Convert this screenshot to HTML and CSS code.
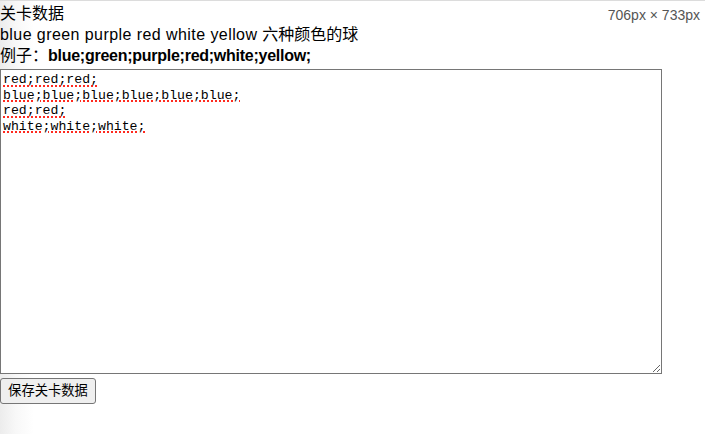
FILE: index.html
```html
<!DOCTYPE html>
<html lang="zh-CN">
<head>
<meta charset="utf-8">
<title>关卡数据</title>
<link rel="stylesheet" href="styles.css">
</head>
<body>
<div class="page">
  <div class="header">
    <div class="title">关卡数据</div>
    <div class="size">706px × 733px</div>
  </div>
  <div class="line"><span class="latin">blue green purple red white yellow </span>六种颜色的球</div>
  <div class="line">例子：<b class="example">blue;green;purple;red;white;yellow;</b></div>
  <textarea class="data" spellcheck="false">red;red;red;
blue;blue;blue;blue;blue;blue;
red;red;
white;white;white;</textarea>
  <div class="actions">
    <button class="save" type="button">保存关卡数据</button>
  </div>
</div>
</body>
</html>
```

FILE: styles.css
```css
html, body {
  margin: 0;
  padding: 0;
  height: 100%;
}

body {
  background: linear-gradient(to right, #ececec 0px, #f8f8f8 16px, #ffffff 34px);
  border-top: 1px solid #dcdcdc;
  box-sizing: border-box;
  font-family: "Liberation Sans", "Noto Sans CJK SC", sans-serif;
  font-size: 16px;
  color: #000;
}

.page {
  padding-top: 2px;
  display: flex;
  flex-direction: column;
  align-items: flex-start;
}

.header {
  align-self: stretch;
  display: flex;
  justify-content: space-between;
  align-items: flex-start;
}

.title,
.line {
  line-height: 21px;
}

.latin {
  letter-spacing: 0.43px;
}

.example {
  font-weight: bold;
  letter-spacing: -0.26px;
}

.size {
  font-size: 14px;
  color: #555;
  padding-top: 4px;
  padding-right: 5px;
}

.data {
  margin: 3px 0 0 0;
  width: 662px;
  height: 305px;
  box-sizing: border-box;
  border: 1px solid #767676;
  padding: 2px;
  font-family: "Liberation Mono", monospace;
  font-size: 13.2px;
  line-height: 15.5px;
  color: #000;
  background: #fff;
  resize: both;
  text-decoration: underline dotted #ff2a1f;
  text-decoration-thickness: 1.5px;
  text-underline-offset: 2px;
}

.actions {
  margin-top: 4px;
}

.save {
  font-family: "Liberation Sans", "Noto Sans CJK SC", sans-serif;
  font-size: 13.3px;
  line-height: 18px;
  height: 26px;
  width: 96px;
  padding: 3px 0;
  white-space: nowrap;
  text-align: center;
  border: 1px solid #767676;
  border-radius: 3px;
  background: #efefef;
  color: #000;
  box-sizing: border-box;
}
```
